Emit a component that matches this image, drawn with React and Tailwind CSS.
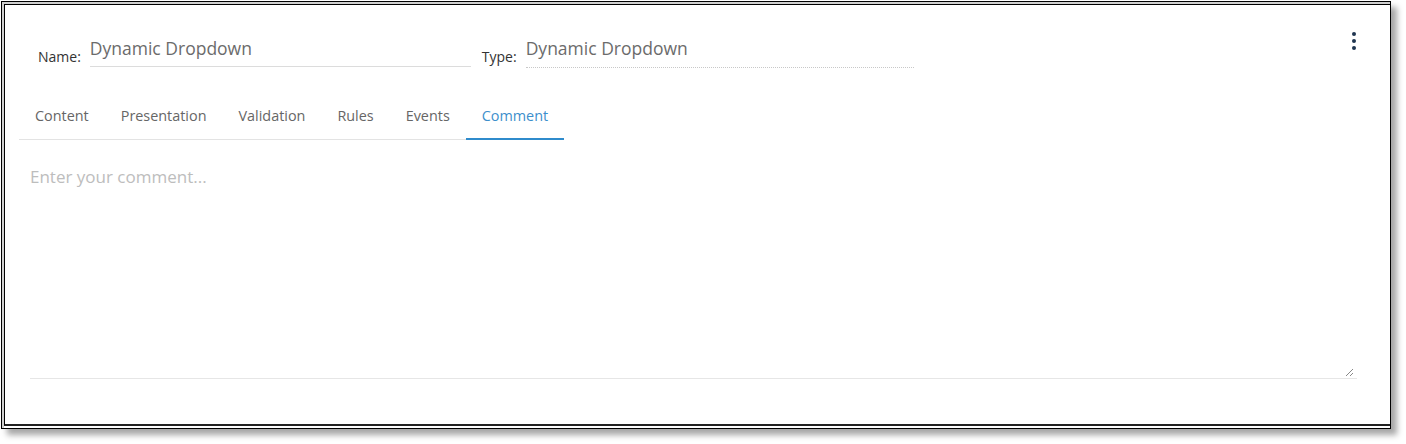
import React from 'react';

const tabs = ['Content', 'Presentation', 'Validation', 'Rules', 'Events', 'Comment'];

const App = () => {
  const active = 'Comment';

  return (
    <div className="w-[1406px] h-[444px] bg-white pt-[1px] pl-[1px]" style={{ fontFamily: '"Open Sans", "Noto Sans", sans-serif' }}>
      {/* window frame */}
      <div className="w-[1390px] h-[428px] border border-black bg-white shadow-[6px_6px_6px_rgba(0,0,0,0.35)]">
        <div className="h-full border-t-2 border-l-2 border-[#cfcfcf]">
          <div className="h-[422px] border-t border-l border-b-2 border-black border-b-[#222] flex flex-col">
            {/* header fields */}
            <div className="flex items-start pt-[31px] pl-[33px] pr-[33px]">
              <div className="flex items-end">
                <span className="text-[14px] text-[#333] mb-0 mr-[9px]">Name:</span>
                <div className="w-[381px] border-b border-[#dcdcdc] text-[17.5px] text-[#6b6b6b] leading-[24px] pb-[6px]">
                  Dynamic Dropdown
                </div>
              </div>
              <div className="flex items-end ml-[11px]">
                <span className="text-[14px] text-[#333] mb-[1px] mr-[9px]">Type:</span>
                <div className="w-[388px] border-b border-dotted border-[#c8c8c8] text-[17.5px] text-[#6b6b6b] leading-[24px] pb-[7px]">
                  Dynamic Dropdown
                </div>
              </div>
              <div className="ml-auto flex flex-col items-center gap-[3px] -mt-[4px] pr-[1px]">
                <span className="w-[4px] h-[4px] rounded-full bg-[#1f3550]" />
                <span className="w-[4px] h-[4px] rounded-full bg-[#1f3550]" />
                <span className="w-[4px] h-[4px] rounded-full bg-[#1f3550]" />
              </div>
            </div>

            {/* tabs */}
            <div className="pl-[14px] mt-[35px]">
              <div className="inline-flex border-b border-[#e3e3e3]">
                {tabs.map(tab => (
                  <div
                    key={tab}
                    className={`px-4 pb-[11px] text-[14.4px] -mb-[1px] ${tab === active ? 'text-[#3d8fcc] border-b-2 border-[#2f8bcc]' : 'text-[#666] border-b-2 border-transparent'}`}
                  >
                    {tab}
                  </div>
                ))}
              </div>
            </div>

            {/* comment area */}
            <div className="pl-[25px] pr-[33px] pt-[24px]">
              <div className="relative h-[215px] border-b border-[#e6e6e6]">
                <span className="text-[17px] text-[#bdbdbd]">Enter your comment...</span>
                <svg className="absolute right-[3px] bottom-[1px]" width="9" height="9" viewBox="0 0 9 9">
                  <path d="M1 8 L8 1 M5 8 L8 5" stroke="#888" strokeWidth="1" />
                </svg>
              </div>
            </div>
          </div>
        </div>
      </div>
    </div>
  );
};

export default App;
